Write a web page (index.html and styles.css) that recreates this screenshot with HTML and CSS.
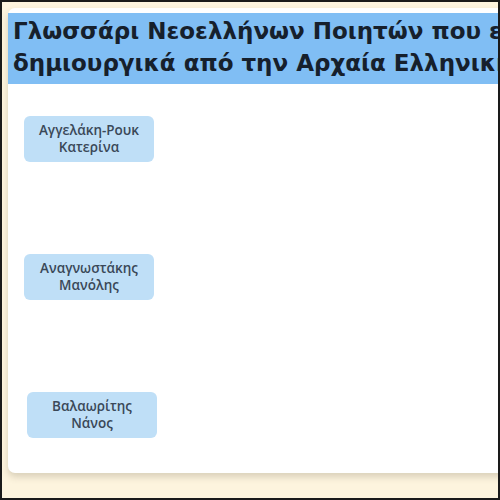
FILE: index.html
```html
<!DOCTYPE html>
<html lang="el">
<head>
<meta charset="utf-8">
<link rel="stylesheet" href="styles.css">
</head>
<body>
<div class="frame">
  <div class="card">
    <div class="header">
      <span class="line">Γλωσσάρι Νεοελλήνων Ποιητών που εμπνεύστηκαν</span>
      <span class="line">δημιουργικά από την Αρχαία Ελληνική Γραμματεία</span>
    </div>
    <div class="list">
      <div class="poet">Αγγελάκη-Ρουκ<br>Κατερίνα</div>
      <div class="poet">Αναγνωστάκης<br>Μανόλης</div>
      <div class="poet shift">Βαλαωρίτης<br>Νάνος</div>
    </div>
  </div>
</div>
</body>
</html>
```

FILE: styles.css
```css
html, body {
  margin: 0;
  padding: 0;
}
.frame {
  box-sizing: border-box;
  width: 500px;
  height: 500px;
  border: 2px solid #1a1a1a;
  background: #fdf4de;
  overflow: hidden;
  padding: 6px 0 0 6px;
}
.card {
  width: 760px;
  height: 465px;
  background: #ffffff;
  border-radius: 7px;
  box-shadow: 0 4px 7px rgba(90, 80, 60, 0.22);
  padding-top: 5px;
  box-sizing: border-box;
}
.header {
  background: #80bef4;
  height: 71px;
  box-sizing: border-box;
  padding: 2px 0 0 5px;
  font-family: "DejaVu Sans", sans-serif;
  font-weight: bold;
  font-size: 23px;
  line-height: 32px;
  color: #16202c;
}
.line {
  display: block;
  white-space: nowrap;
}
.list {
  display: flex;
  flex-direction: column;
  align-items: flex-start;
  gap: 92px;
  padding: 32px 0 0 16px;
}
.poet {
  width: 130px;
  height: 46px;
  box-sizing: border-box;
  background: #bfdff7;
  border-radius: 6px;
  display: flex;
  align-items: center;
  justify-content: center;
  text-align: center;
  font-family: "Open Sans", sans-serif;
  font-weight: 600;
  font-size: 13.5px;
  line-height: 17px;
  color: #3a4858;
}
.shift {
  margin-left: 3px;
}
```
